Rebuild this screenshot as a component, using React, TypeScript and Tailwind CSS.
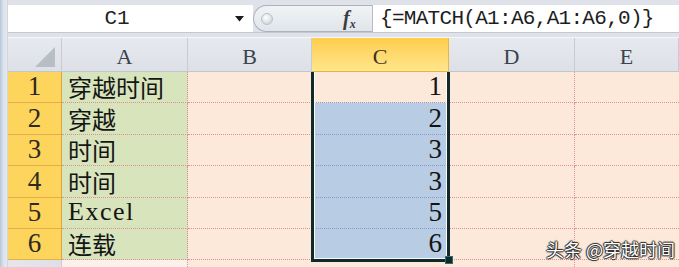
import React from 'react';

const rows = [
  { n: 1, a: '穿越时间', c: 1, h: 'h-[31px]' },
  { n: 2, a: '穿越', c: 2, h: 'h-[32px]' },
  { n: 3, a: '时间', c: 3, h: 'h-[31px]' },
  { n: 4, a: '时间', c: 3, h: 'h-[32px]' },
  { n: 5, a: 'Excel', c: 5, h: 'h-[31px]' },
  { n: 6, a: '连载', c: 6, h: 'h-[31px]' },
];

const serif = "font-['Liberation_Serif','Noto_Sans_CJK_SC',serif]";
const cjk = "font-['Liberation_Serif','Noto_Sans_CJK_SC',sans-serif]";
const mono = "font-['Liberation_Mono','Noto_Sans_CJK_SC',monospace]";

const ColHead = ({ label, w, active }: { label: string; w: string; active?: boolean }) => (
  <div
    className={`${w} flex items-end justify-center pb-[3px] border-r border-b text-[22px] leading-none ${serif} ${
      active
        ? 'bg-gradient-to-b from-[#ffcd4a] to-[#ffe68c] border-r-[#e7b54a] border-b-[#e9b343] text-[#3b3424]'
        : 'bg-gradient-to-b from-[#e6e9ee] to-[#dde1e7] border-r-[#c6ccd4] border-b-[#bfc6cf] text-[#3a4350]'
    }`}
  >
    {label}
  </div>
);

export default function App() {
  return (
    <div className="relative w-[679px] h-[267px] overflow-hidden flex bg-[#dfe3e9]">
      {/* window frame */}
      <div className="w-[8px] h-full bg-gradient-to-r from-[#b9c6d6] via-[#dbe3ec] to-[#e4e9ef] border-r border-r-[#cfd6de]" />

      <div className="flex-1 flex flex-col">
        {/* formula bar */}
        <div className="h-[38px] pt-[5px] bg-[#dfe3e9] border-b border-b-[#f4f6f8]">
          <div className="h-[28px] flex border-b border-b-[#c3c9d1]">
            <div className="w-[245px] bg-white flex">
              <div className={`w-[218px] flex items-center justify-center text-[21px] text-[#222] ${mono}`}>C1</div>
              <div className="flex-1 flex items-center justify-center">
                <svg width="9" height="6" viewBox="0 0 9 6">
                  <path d="M0 0h9L4.5 5.5z" fill="#1b1b1b" />
                </svg>
              </div>
            </div>
            <div className="w-[119px] flex items-center rounded-l-[14px] border border-[#aab2bb] border-r-0 bg-gradient-to-b from-[#f1f3f6] to-[#e1e5ea]">
              <div className="ml-[7px] w-[12px] h-[12px] rounded-full bg-[radial-gradient(circle_at_40%_35%,#ffffff,#c4cad1)] border border-[#b9c0c8]" />
              <div className={`ml-[70px] text-[20px] italic font-bold text-[#3c3c3c] leading-none ${serif}`}>
                f<span className="text-[12px] align-[-3px]">x</span>
              </div>
            </div>
            <div
              className={`flex-1 bg-white border-l border-l-[#b7bec7] flex items-center pl-[7px] text-[21px] tracking-[-0.7px] text-[#1d1d1d] ${mono}`}
            >
              {'{=MATCH(A1:A6,A1:A6,0)}'}
            </div>
          </div>
        </div>

        {/* column headers */}
        <div className="h-[34px] flex">
          <div className="w-[54px] relative bg-gradient-to-b from-[#e6e9ee] to-[#dde1e7] border-r border-b border-r-[#c6ccd4] border-b-[#bfc6cf] flex items-end justify-end pr-[6px] pb-[4px]">
            <svg width="20" height="20" viewBox="0 0 20 20">
              <path d="M20 0V20H0z" fill="#b8bec6" />
            </svg>
          </div>
          <ColHead label="A" w="w-[126px]" />
          <ColHead label="B" w="w-[124px]" />
          <ColHead label="C" w="w-[137px]" active />
          <ColHead label="D" w="w-[126px]" />
          <ColHead label="E" w="flex-1" />
        </div>

        {/* rows */}
        {rows.map((r) => (
          <div key={r.n} className={`flex ${r.h}`}>
            <div
              className={`w-[54px] bg-[#fdd45c] border-r border-b border-r-[#e0a63a] border-b-[#e3ae4c] flex items-end justify-center pb-[2px] text-[27px] leading-none text-[#2e2a20] ${serif}`}
            >
              {r.n}
            </div>
            <div
              className={`w-[126px] bg-[#d8e4bc] border-r border-b border-dotted border-[#df8f98] flex items-end pl-[6px] leading-none text-[#151515] ${
                r.a === 'Excel' ? `${serif} text-[26px] tracking-[1.5px] pb-[3px]` : `${cjk} text-[24px] pb-[1px]`
              }`}
            >
              {r.a}
            </div>
            <div className="w-[124px] bg-[#fde9d9] border-b border-dotted border-[#df8f98]" />
            <div
              className={`w-[137px] border-b border-dotted flex items-end justify-end pr-[7px] pb-[2px] text-[27px] leading-none text-[#141414] ${serif} ${
                r.n === 1 ? 'bg-[#fde9d9] border-[#8f94cc]' : 'bg-[#b8cce4] border-[#8f94cc]'
              }`}
            >
              {r.c}
            </div>
            <div className="w-[126px] bg-[#fde9d9] border-r border-b border-dotted border-[#df8f98]" />
            <div className="flex-1 bg-[#fde9d9] border-b border-dotted border-[#df8f98]" />
          </div>
        ))}

        {/* row 7 (partly visible) */}
        <div className="flex flex-1">
          <div className="w-[54px] bg-gradient-to-r from-[#e4e7ec] to-[#dde1e7] border-r border-r-[#c6ccd4]" />
          <div className="w-[126px] bg-[#fbf1ea] border-r border-dotted border-[#df8f98]" />
          <div className="w-[124px] bg-[#fde9d9]" />
          <div className="w-[137px] bg-[#fde9d9]" />
          <div className="w-[126px] bg-[#fde9d9] border-r border-dotted border-[#df8f98]" />
          <div className="flex-1 bg-[#fde9d9]" />
        </div>
      </div>

      {/* selection range C1:C6 */}
      <div className="absolute left-[311px] top-[72px] w-[139px] h-[190px] border-x-[3px] border-b-[3px] border-[#102a2b] pointer-events-none">
        <div className="w-full h-full border-x border-b border-white/90" />
      </div>
      <div className="absolute left-[445px] top-[256px] w-[8px] h-[8px] bg-[#102a2b] border border-[#2f6b6b] pointer-events-none" />

      {/* watermark */}
      <div
        className={`absolute left-[546px] top-[240px] text-[18px] text-white leading-none font-['Noto_Sans_CJK_SC',sans-serif] [text-shadow:1px_0_1px_#222,-1px_0_1px_#222,0_1px_1px_#222,0_-1px_1px_#222]`}
      >
        头条 @穿越时间
      </div>
    </div>
  );
}
